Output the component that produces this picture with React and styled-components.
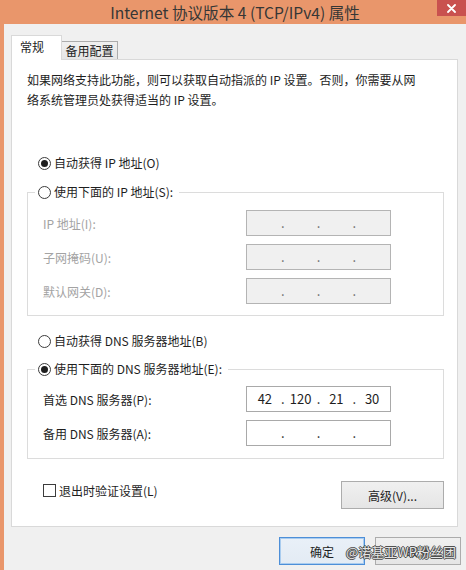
import React from "react";
import styled, { createGlobalStyle, css } from "styled-components";

const Global = createGlobalStyle`
  html, body { margin: 0; padding: 0; background: #f0f0f0; }
  body { font-family: "Noto Sans CJK SC", "Noto Sans", sans-serif; font-size: 12px; color: #1e1e1e; }
  * { box-sizing: border-box; }
`;

const ORANGE = "#e9966b";

const Window = styled.div`
  position: relative;
  width: 466px;
  height: 570px;
  display: flex;
  flex-direction: column;
  overflow: hidden;
  background: #f0f0f0;
`;

const TitleBar = styled.div`
  height: 24px;
  background: ${ORANGE};
  display: grid;
  grid-template-columns: 1fr auto 1fr;
  align-items: center;
`;

const Title = styled.div`
  grid-column: 2;
  font-size: 15.6px;
  line-height: 22px;
  color: #363636;
  white-space: nowrap;
  padding-left: 4px;
`;

const CloseBtn = styled.div`
  grid-column: 3;
  justify-self: end;
  align-self: start;
  width: 29px;
  height: 16px;
  background: #c9514f;
  display: flex;
  align-items: center;
  justify-content: center;
`;

const Body = styled.div`
  flex: 1;
  border-left: 4px solid ${ORANGE};
  padding: 11px 5px 0 7px;
  display: flex;
  flex-direction: column;
`;

const TabStrip = styled.div`
  display: flex;
  align-items: flex-end;
  height: 25px;
`;

const Tab = styled.div`
  position: relative;
  font-size: 12px;
  white-space: nowrap;
  ${(p) =>
    p.$active
      ? css`
          z-index: 2;
          width: 51px;
          height: 25px;
          background: #fff;
          border: 1px solid #d9d9d9;
          border-bottom: none;
          padding-left: 8px;
          line-height: 22px;
        `
      : css`
          z-index: 0;
          width: 57px;
          height: 19px;
          margin-left: -1px;
          background: linear-gradient(#f0f0f0, #e5e5e5);
          border: 1px solid #acacac;
          border-bottom: none;
          text-align: center;
          line-height: 18px;
        `}
`;

const Panel = styled.div`
  position: relative;
  z-index: 1;
  margin-top: -1px;
  width: 447px;
  height: 468px;
  background: #fff;
  border: 1px solid #d9d9d9;
  padding: 10px 13px 0 15px;
  display: flex;
  flex-direction: column;
`;

const Desc = styled.p`
  margin: 0;
  line-height: 20px;
  font-size: 12px;
  color: #1e1e1e;
`;

const RadioRow = styled.label`
  display: flex;
  align-items: center;
  height: 20px;
  line-height: 20px;
  padding-left: 11px;
  margin-top: ${(p) => p.$mt || 0}px;
  gap: 3px;
  color: #1e1e1e;
  white-space: nowrap;
`;

const RadioDot = styled.span`
  width: 13px;
  height: 13px;
  border-radius: 50%;
  border: 1px solid #3c3c3c;
  background: #fff;
  display: flex;
  align-items: center;
  justify-content: center;
  flex: none;
  &::after {
    content: "";
    width: 7px;
    height: 7px;
    border-radius: 50%;
    background: ${(p) => (p.$on ? "#1e1e1e" : "transparent")};
  }
`;

const Group = styled.fieldset`
  margin: ${(p) => p.$mt || 0}px 0 0 0;
  padding: 0;
  border: 1px solid #dcdcdc;
  min-width: 0;
`;

const Legend = styled.legend`
  margin-left: 7px;
  padding: 0 6px 0 3px;
  height: 20px;
  display: flex;
  align-items: center;
  gap: 3px;
  line-height: 20px;
  white-space: nowrap;
`;

const Fields = styled.div`
  display: grid;
  grid-template-columns: 203px 145px;
  grid-auto-rows: 26px;
  row-gap: 8px;
  align-items: center;
  padding: ${(p) => p.$pt}px 0 ${(p) => p.$pb}px 15px;
`;

const FieldLabel = styled.span`
  color: ${(p) => (p.$disabled ? "#a3a3a3" : "#1e1e1e")};
  white-space: nowrap;
`;

const IpBox = styled.div`
  height: 26px;
  display: flex;
  align-items: center;
  border: 1px solid ${(p) => (p.$disabled ? "#b4b4b4" : "#a9a9a9")};
  background: ${(p) => (p.$disabled ? "#f0f0f0" : "#fff")};
  font-size: 13px;
  color: #1e1e1e;
`;

const Octet = styled.span`
  flex: 1;
  text-align: center;
  line-height: 24px;
`;

const Dot = styled.span`
  width: 0;
  display: flex;
  justify-content: center;
  line-height: 24px;
  color: ${(p) => (p.$disabled ? "#6a6a6a" : "#1e1e1e")};
`;

const BottomRow = styled.div`
  margin-top: 22px;
  display: flex;
  justify-content: space-between;
  align-items: flex-start;
  padding-left: 16px;
`;

const CheckLabel = styled.label`
  display: flex;
  align-items: center;
  gap: 3px;
  height: 20px;
  margin-top: -1px;
  white-space: nowrap;
`;

const CheckBox = styled.span`
  width: 13px;
  height: 13px;
  border: 1px solid #3c3c3c;
  background: #fff;
  flex: none;
`;

const Button = styled.button`
  font-family: inherit;
  font-size: 12px;
  color: #1e1e1e;
  width: ${(p) => p.$w}px;
  height: 28px;
  padding: 0;
  border: 1px solid ${(p) => (p.$default ? "#4d8fd8" : "#acacac")};
  background: ${(p) =>
    p.$default ? "linear-gradient(#e9f0f8, #e3ebf4)" : "linear-gradient(#f0f0f0, #e5e5e5)"};
  box-shadow: ${(p) => (p.$default ? "inset 0 0 0 1px #a9ccef" : "none")};
`;

const Footer = styled.div`
  margin-top: 10px;
  display: flex;
  justify-content: flex-end;
  gap: 10px;
`;

const Watermark = styled.div`
  position: absolute;
  right: 10px;
  bottom: 9px;
  font-size: 13px;
  line-height: 18px;
  color: rgba(255, 255, 255, 0.9);
  text-shadow: 0 0 1px #333, 1px 0 0 #555, -1px 0 0 #555, 0 1px 0 #555, 0 -1px 0 #555;
  white-space: nowrap;
  pointer-events: none;
`;

function Ip({ values, disabled }) {
  const v = values || ["", "", "", ""];
  return (
    <IpBox $disabled={disabled}>
      <Octet>{v[0]}</Octet>
      <Dot $disabled={disabled}>.</Dot>
      <Octet>{v[1]}</Octet>
      <Dot $disabled={disabled}>.</Dot>
      <Octet>{v[2]}</Octet>
      <Dot $disabled={disabled}>.</Dot>
      <Octet>{v[3]}</Octet>
    </IpBox>
  );
}

export default function App() {
  return (
    <>
      <Global />
      <Window>
        <TitleBar>
          <Title>Internet 协议版本 4 (TCP/IPv4) 属性</Title>
          <CloseBtn>
            <svg width="9" height="9" viewBox="0 0 9 9">
              <path d="M1 1 L8 8 M8 1 L1 8" stroke="#fff" strokeWidth="1.8" strokeLinecap="round" />
            </svg>
          </CloseBtn>
        </TitleBar>
        <Body>
          <TabStrip>
            <Tab $active>常规</Tab>
            <Tab>备用配置</Tab>
          </TabStrip>
          <Panel>
            <Desc>
              如果网络支持此功能，则可以获取自动指派的 IP 设置。否则，你需要从网
              <br />
              络系统管理员处获得适当的 IP 设置。
            </Desc>

            <RadioRow $mt={43}>
              <RadioDot $on />
              自动获得 IP 地址(O)
            </RadioRow>

            <Group $mt={9}>
              <Legend>
                <RadioDot />
                使用下面的 IP 地址(S):
              </Legend>
              <Fields $pt={8} $pb={11}>
                <FieldLabel $disabled>IP 地址(I):</FieldLabel>
                <Ip disabled />
                <FieldLabel $disabled>子网掩码(U):</FieldLabel>
                <Ip disabled />
                <FieldLabel $disabled>默认网关(D):</FieldLabel>
                <Ip disabled />
              </Fields>
            </Group>

            <RadioRow $mt={15}>
              <RadioDot />
              自动获得 DNS 服务器地址(B)
            </RadioRow>

            <Group $mt={8}>
              <Legend>
                <RadioDot $on />
                使用下面的 DNS 服务器地址(E):
              </Legend>
              <Fields $pt={7} $pb={12}>
                <FieldLabel>首选 DNS 服务器(P):</FieldLabel>
                <Ip values={["42", "120", "21", "30"]} />
                <FieldLabel>备用 DNS 服务器(A):</FieldLabel>
                <Ip />
              </Fields>
            </Group>

            <BottomRow>
              <CheckLabel>
                <CheckBox />
                退出时验证设置(L)
              </CheckLabel>
              <Button $w={103}>高级(V)...</Button>
            </BottomRow>
          </Panel>
          <Footer>
            <Button $w={86} $default>
              确定
            </Button>
            <Button $w={86}>取消</Button>
          </Footer>
        </Body>
        <Watermark>@诺基亚WP粉丝团</Watermark>
      </Window>
    </>
  );
}
